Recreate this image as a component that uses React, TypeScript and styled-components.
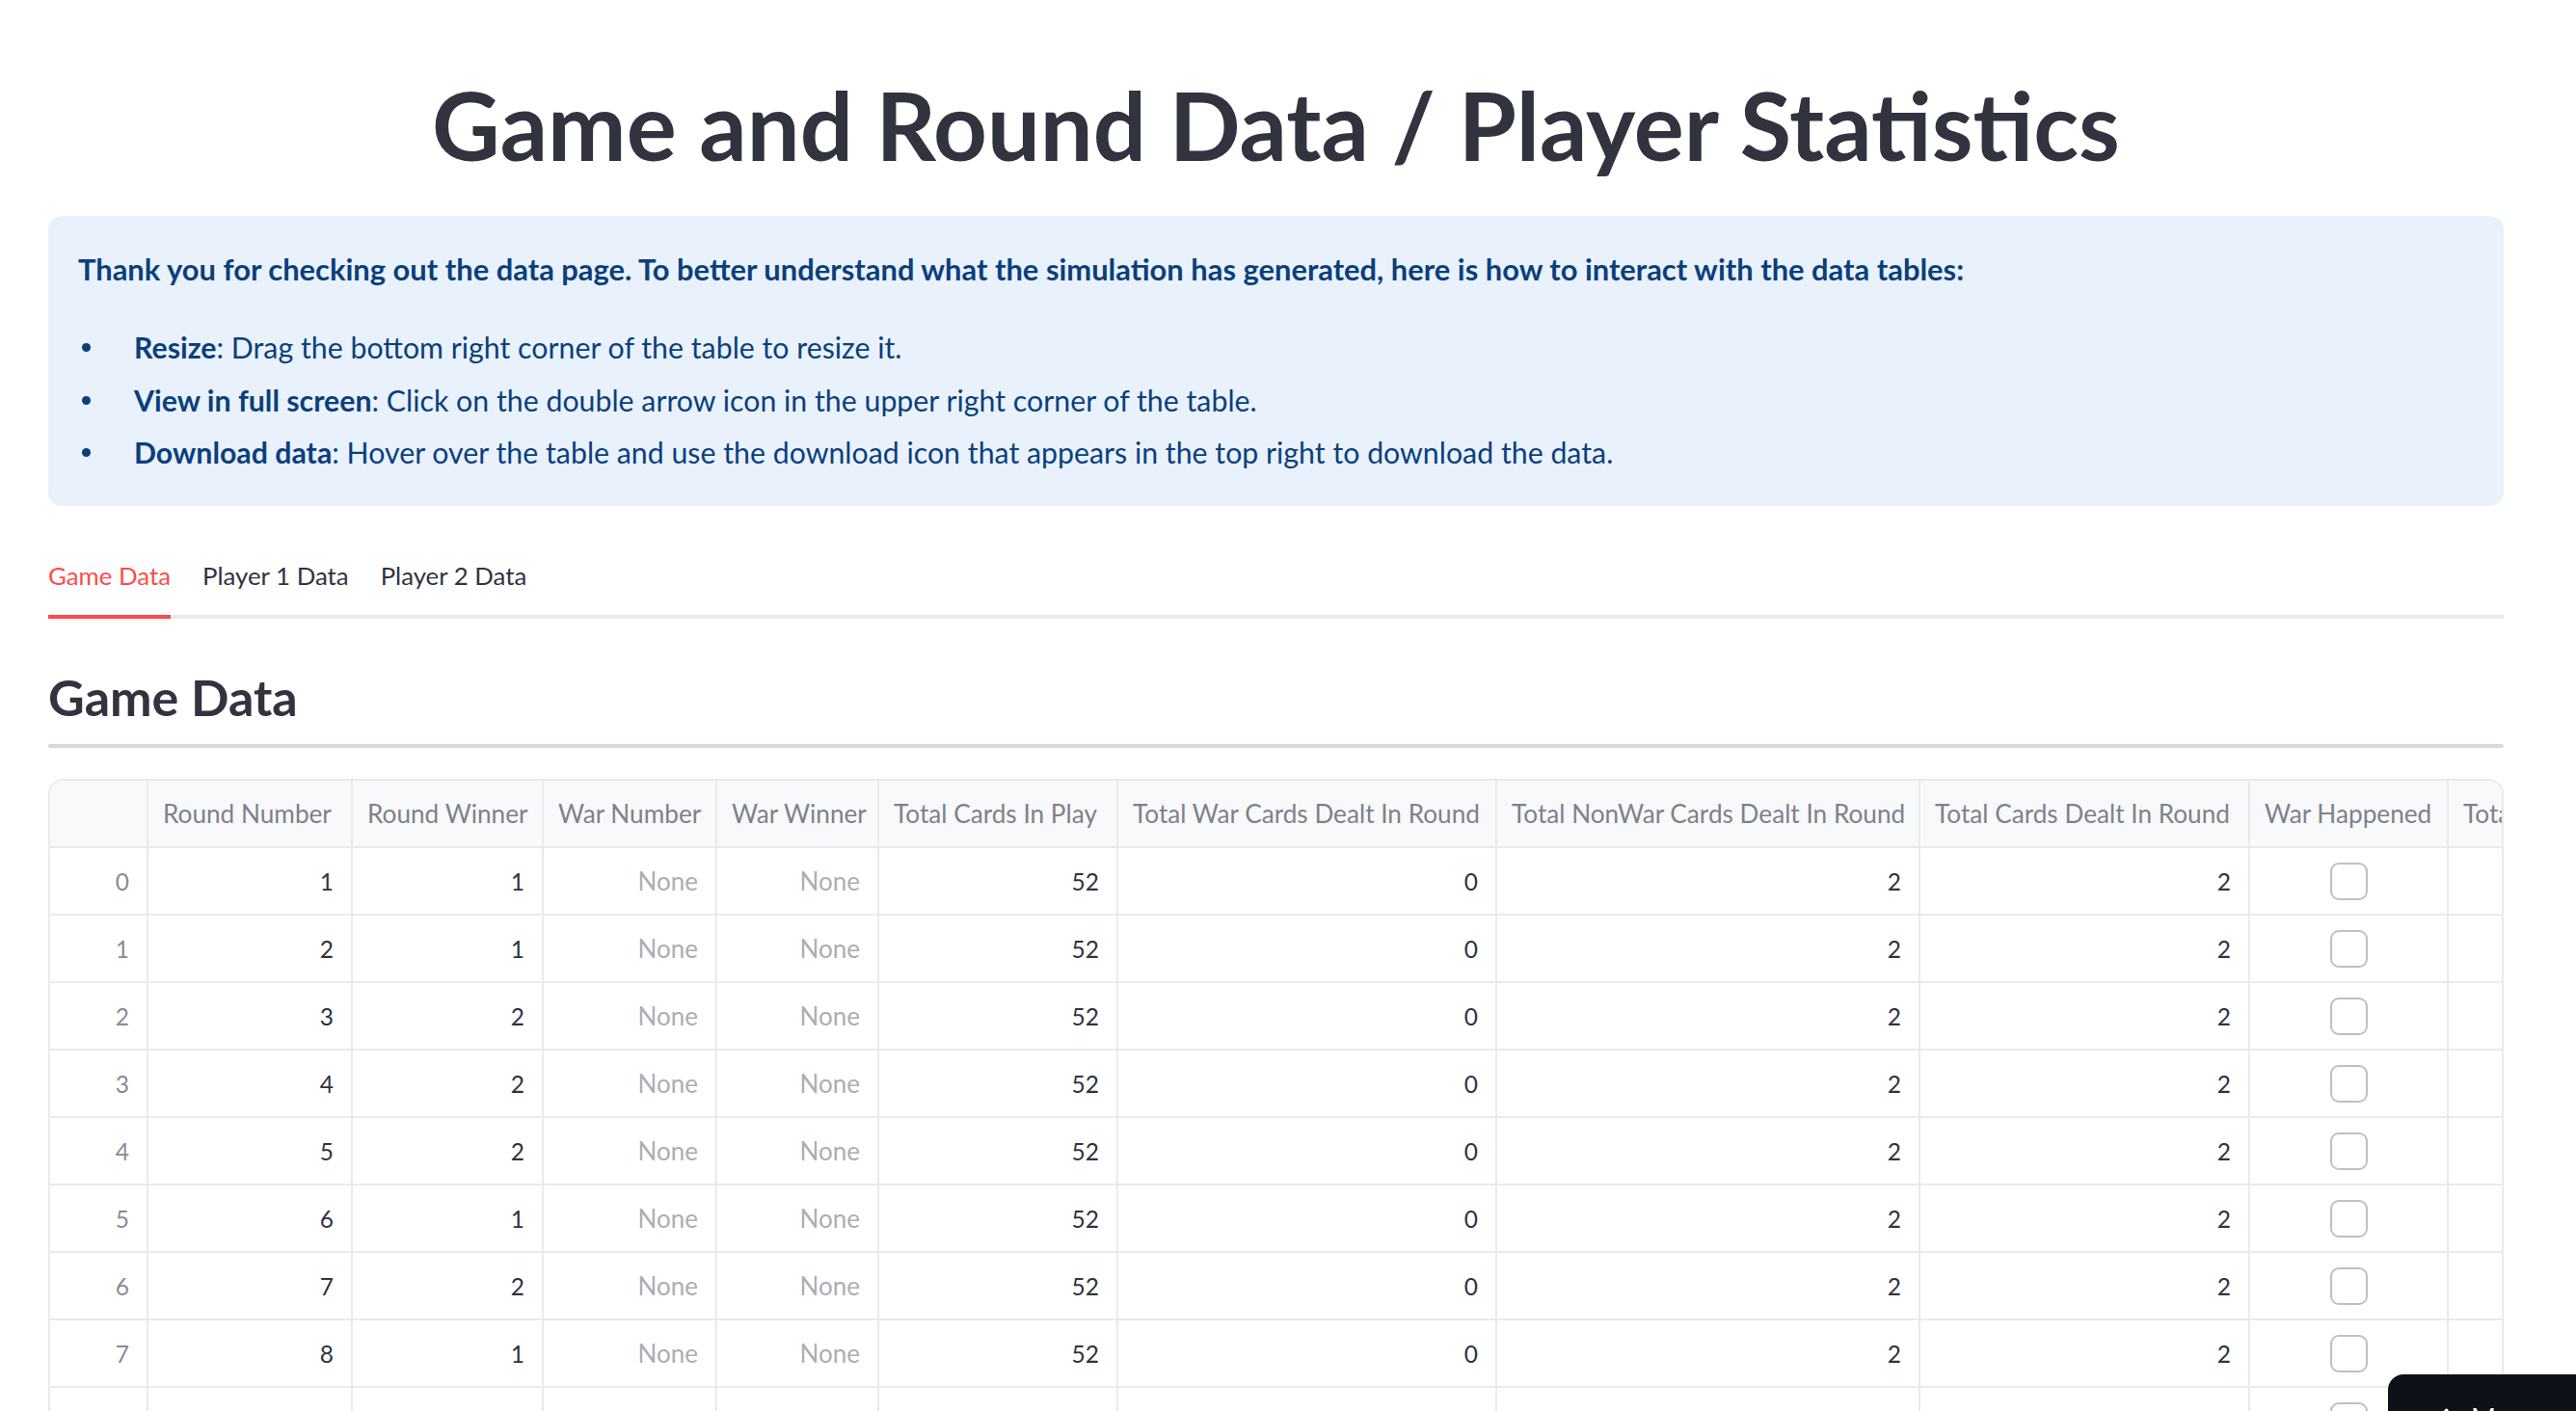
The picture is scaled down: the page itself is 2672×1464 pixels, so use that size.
import React from "react";
import styled, { createGlobalStyle } from "styled-components";
import { ChevronLeft } from "lucide-react";

// data page of the war simulation

const GlobalStyle = createGlobalStyle`
  html, body {
    margin: 0;
    padding: 0;
    background: #ffffff;
  }
  body {
    font-family: Lato, "Noto Sans", sans-serif;
    color: #31333f;
    overflow: hidden;
  }
`;

const COLUMNS = "102px 212px 198px 180px 168px 248px 393px 439px 342px 206px 300px";

const Main = styled.main`
  padding: 72px 75px 0 50px;
`;

const Title = styled.h1`
  margin: 0;
  text-align: center;
  font-size: 97.4px;
  line-height: 116px;
  font-weight: 700;
  color: #31333f;
`;

const InfoBox = styled.div`
  margin-top: 36px;
  padding: 31px;
  border-radius: 14px;
  background: #e9f2fc;
  color: #0b3f7c;
  font-size: 30.3px;
`;

const InfoLead = styled.p`
  margin: 0 0 32px;
  font-size: 30.9px;
  line-height: 49px;
  font-weight: 700;
`;

const InfoList = styled.ul`
  margin: 0;
  padding: 0;
  list-style: none;
`;

const InfoItem = styled.li`
  position: relative;
  padding-left: 58px;
  line-height: 49px;

  & + & {
    margin-top: 5.5px;
  }

  &::before {
    content: "";
    position: absolute;
    left: 4px;
    top: 20px;
    width: 9px;
    height: 9px;
    border-radius: 50%;
    background: currentColor;
  }

  strong {
    font-weight: 700;
  }
`;

const TabList = styled.div`
  display: flex;
  gap: 33px;
  margin-top: 31px;
  border-bottom: 4px solid #eaeaeb;
`;

const Tab = styled.button<{ $active?: boolean }>`
  padding: 0;
  margin-bottom: -4px;
  border: none;
  border-bottom: 4px solid ${(p) => (p.$active ? "#ff4b4b" : "transparent")};
  background: none;
  font-family: inherit;
  font-size: 25.8px;
  line-height: 82px;
  color: ${(p) => (p.$active ? "#ff4b4b" : "#31333f")};
  cursor: pointer;
`;

const SectionTitle = styled.h2`
  margin: 49px 0 0;
  font-size: 52px;
  line-height: 64px;
  font-weight: 700;
  color: #31333f;
`;

const Divider = styled.hr`
  margin: 17px 0 0;
  height: 4px;
  border: none;
  border-radius: 2px;
  background: #d6d8df;
`;

const Grid = styled.div`
  margin-top: 32px;
  border: 2px solid #eaeaeb;
  border-radius: 16px;
  overflow: hidden;
`;

const Row = styled.div<{ $header?: boolean }>`
  display: grid;
  grid-template-columns: ${COLUMNS};
  height: 70px;
  background: ${(p) => (p.$header ? "#f8f9fb" : "#ffffff")};
`;

type Tone = "text" | "muted" | "faded" | "header";

const toneColor: Record<Tone, string> = {
  text: "#31333f",
  muted: "#8a8c93",
  faded: "#adadb2",
  header: "#7f818a",
};

const toneSize: Record<Tone, string> = {
  text: "24.5px",
  muted: "24.5px",
  faded: "26px",
  header: "26.2px",
};

const Cell = styled.div<{ $align?: "left" | "right" | "center"; $tone?: Tone }>`
  display: flex;
  align-items: center;
  justify-content: ${(p) =>
    p.$align === "left" ? "flex-start" : p.$align === "center" ? "center" : "flex-end"};
  box-sizing: border-box;
  padding: ${(p) => (p.$align === "left" ? "0 0 0 15px" : p.$align === "center" ? "0" : "0 18px 0 0")};
  border-right: 2px solid #eaeaeb;
  border-bottom: 2px solid #eaeaeb;
  font-size: ${(p) => toneSize[p.$tone || "text"]};
  white-space: nowrap;
  overflow: hidden;
  color: ${(p) => toneColor[p.$tone || "text"]};
`;

const Checkbox = styled.span`
  display: block;
  width: 39px;
  height: 39px;
  box-sizing: border-box;
  border: 2.5px solid #bfc0c5;
  border-radius: 9px;
  background: #ffffff;
`;

const ManageButton = styled.button`
  position: fixed;
  right: -45px;
  bottom: -42px;
  width: 240px;
  height: 80px;
  display: flex;
  align-items: flex-start;
  gap: 14px;
  padding: 25px 0 0 42px;
  border: none;
  border-radius: 16px 0 0 0;
  background: #0e1117;
  color: #ffffff;
  font-family: inherit;
  font-size: 28px;
  line-height: 40px;
  cursor: pointer;

  svg {
    margin-top: 5px;
  }
`;

const headers = [
  "",
  "Round Number",
  "Round Winner",
  "War Number",
  "War Winner",
  "Total Cards In Play",
  "Total War Cards Dealt In Round",
  "Total NonWar Cards Dealt In Round",
  "Total Cards Dealt In Round",
  "War Happened",
  "Total War Cards In Round",
];

const rounds = [
  [1, 1],
  [2, 1],
  [3, 2],
  [4, 2],
  [5, 2],
  [6, 1],
  [7, 2],
  [8, 1],
  [9, 1],
  [10, 2],
];

const App: React.FC = () => {
  return (
    <>
      <GlobalStyle />
      <Main>
        <Title>Game and Round Data / Player Statistics</Title>
        <InfoBox>
          <InfoLead>
            Thank you for checking out the data page. To better understand what the simulation has
            generated, here is how to interact with the data tables:
          </InfoLead>
          <InfoList>
            <InfoItem>
              <strong>Resize</strong>: Drag the bottom right corner of the table to resize it.
            </InfoItem>
            <InfoItem>
              <strong>View in full screen</strong>: Click on the double arrow icon in the upper right
              corner of the table.
            </InfoItem>
            <InfoItem>
              <strong>Download data</strong>: Hover over the table and use the download icon that
              appears in the top right to download the data.
            </InfoItem>
          </InfoList>
        </InfoBox>

        <TabList>
          <Tab $active>Game Data</Tab>
          <Tab>Player 1 Data</Tab>
          <Tab>Player 2 Data</Tab>
        </TabList>

        <SectionTitle>Game Data</SectionTitle>
        <Divider />

        <Grid>
          <Row $header>
            {headers.map((h, i) => (
              <Cell key={i} $align="left" $tone="header">
                {h}
              </Cell>
            ))}
          </Row>
          {rounds.map(([round, winner], i) => (
            <Row key={round}>
              <Cell $tone="muted">{i}</Cell>
              <Cell>{round}</Cell>
              <Cell>{winner}</Cell>
              <Cell $tone="faded">None</Cell>
              <Cell $tone="faded">None</Cell>
              <Cell>52</Cell>
              <Cell>0</Cell>
              <Cell>2</Cell>
              <Cell>2</Cell>
              <Cell $align="center">
                <Checkbox />
              </Cell>
              <Cell>0</Cell>
            </Row>
          ))}
        </Grid>
      </Main>

      <ManageButton>
        <ChevronLeft size={30} strokeWidth={3} />
        Manage app
      </ManageButton>
    </>
  );
};

export default App;
